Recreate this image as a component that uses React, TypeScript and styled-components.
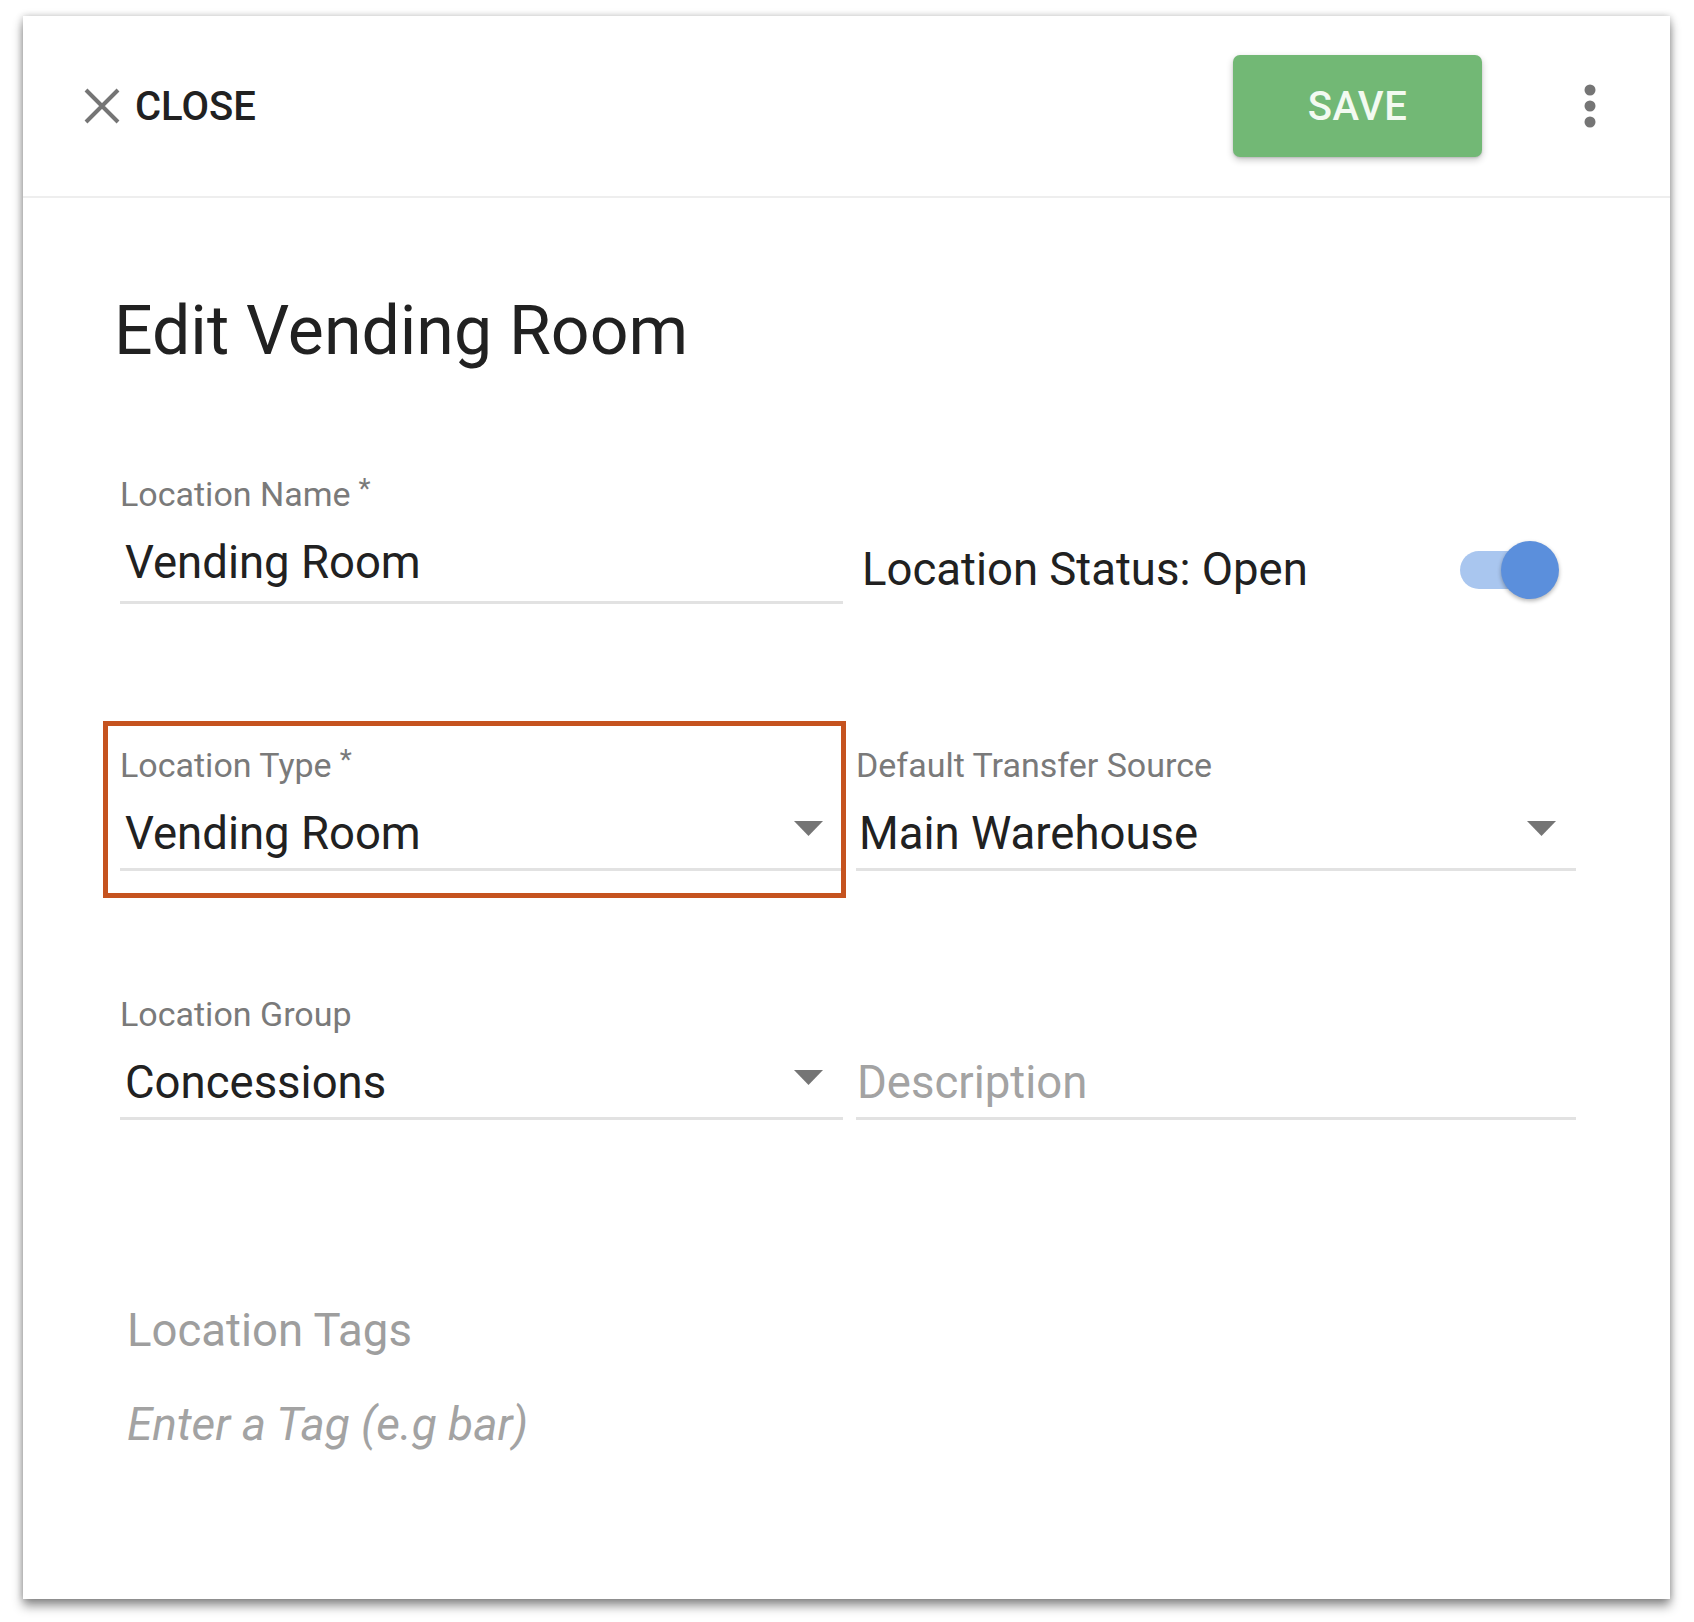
import React from "react";
import styled, { createGlobalStyle } from "styled-components";

const GlobalStyle = createGlobalStyle`
  html, body { margin: 0; padding: 0; background: #ffffff; }
  body { font-family: Roboto, "Liberation Sans", Arial, sans-serif; color: #212121; }
  * { box-sizing: border-box; }
`;

const Page = styled.div`
  width: 1694px;
  height: 1622px;
  padding: 16px 24px 23px 23px;
`;

const Card = styled.div`
  width: 1647px;
  height: 1583px;
  background: #ffffff;
  box-shadow: 0 7px 10px rgba(0, 0, 0, 0.42), 0 0 7px rgba(0, 0, 0, 0.22);
  display: flex;
  flex-direction: column;
`;

const Header = styled.header`
  height: 182px;
  flex: none;
  display: flex;
  align-items: center;
  padding: 0 60px 0 61px;
  border-bottom: 2px solid #eeeeee;
`;

const CloseButton = styled.button`
  display: flex;
  align-items: center;
  gap: 15px;
  background: none;
  border: none;
  padding: 0;
  font-family: Roboto, "Liberation Sans", Arial, sans-serif;
  font-size: 40px;
  font-weight: 500;
  letter-spacing: 0;
  color: #212121;
  cursor: pointer;
`;

const Spacer = styled.div`
  flex: 1;
`;

const SaveButton = styled.button`
  width: 249px;
  height: 102px;
  border: none;
  border-radius: 7px;
  background: #72b875;
  color: #f3faf1;
  font-family: Roboto, "Liberation Sans", Arial, sans-serif;
  font-size: 40px;
  font-weight: 500;
  letter-spacing: 0.5px;
  box-shadow: 0 3px 7px rgba(0, 0, 0, 0.22), 0 1px 2px rgba(0, 0, 0, 0.12);
  margin-right: 88px;
  cursor: pointer;
`;

const MoreButton = styled.button`
  width: 40px;
  height: 60px;
  border: none;
  background: none;
  padding: 0;
  display: flex;
  align-items: center;
  justify-content: center;
  cursor: pointer;
`;

const Body = styled.main`
  padding: 93px 94px 0 97px;
`;

const Title = styled.h1`
  margin: 0 0 0 -6px;
  font-size: 68px;
  line-height: 80px;
  font-weight: 400;
  color: #212121;
`;

const FormRow = styled.div<{ $gap: number }>`
  display: grid;
  grid-template-columns: 723px 720px;
  column-gap: 13px;
  margin-top: ${(p) => p.$gap}px;
`;

const Field = styled.div<{ $highlight?: boolean }>`
  position: relative;
  display: flex;
  flex-direction: column;
  padding-bottom: 6px;
  border-bottom: 3px solid #e2e2e2;
  ${(p) =>
    p.$highlight &&
    `
    &::after {
      content: "";
      position: absolute;
      left: -17px;
      right: -3px;
      top: -24px;
      bottom: -30px;
      border: 5px solid #c5531f;
      pointer-events: none;
    }
  `}
`;

const Label = styled.label`
  display: block;
  height: 40px;
  font-size: 34px;
  line-height: 40px;
  color: #7a7a7a;
`;

const Required = styled.span`
  position: relative;
  top: -8px;
  font-size: 28px;
  line-height: 0;
  margin-left: 8px;
`;

const ValueRow = styled.div<{ $inset: number }>`
  display: flex;
  align-items: center;
  height: 56px;
  margin-top: 21px;
  padding-left: ${(p) => p.$inset}px;
  padding-right: 20px;
`;

const Value = styled.span<{ $placeholder?: boolean }>`
  flex: 1;
  font-size: 45.5px;
  line-height: 56px;
  color: ${(p) => (p.$placeholder ? "#a3a3a3" : "#212121")};
`;

const Arrow = styled.svg`
  flex: none;
  margin-bottom: 12px;
`;

const StatusCell = styled.div`
  display: flex;
  align-items: center;
  justify-content: space-between;
  padding: 66px 17px 4px 6px;
`;

const StatusText = styled.span`
  font-size: 45.5px;
  line-height: 56px;
  color: #212121;
`;

const SwitchRoot = styled.div`
  position: relative;
  width: 99px;
  height: 60px;
  flex: none;
`;

const SwitchTrack = styled.div`
  position: absolute;
  left: 0;
  top: 11px;
  width: 80px;
  height: 38px;
  border-radius: 19px;
  background: #a9c6ef;
`;

const SwitchThumb = styled.div`
  position: absolute;
  right: 0;
  top: 1px;
  width: 58px;
  height: 58px;
  border-radius: 50%;
  background: #5b8fdc;
  box-shadow: 0 2px 4px rgba(0, 0, 0, 0.3);
`;

const TagsTitle = styled.div`
  margin-top: 183px;
  padding-left: 7px;
  font-size: 45.5px;
  line-height: 56px;
  color: #9e9e9e;
`;

const TagInput = styled.div`
  margin-top: 37px;
  padding-left: 7px;
  font-size: 46px;
  line-height: 56px;
  font-style: italic;
  color: #a3a3a3;
`;

const DropArrow = () => (
  <Arrow width="29" height="15" viewBox="0 0 29 15">
    <polygon points="0,0 29,0 14.5,15" fill="#757575" />
  </Arrow>
);

type FieldProps = {
  label?: string;
  required?: boolean;
  value: string;
  placeholder?: boolean;
  select?: boolean;
  inset: number;
  highlight?: boolean;
};

const FormField = ({ label, required, value, placeholder, select, inset, highlight }: FieldProps) => (
  <Field $highlight={highlight}>
    <Label>
      {label}
      {required && <Required>*</Required>}
    </Label>
    <ValueRow $inset={inset}>
      <Value $placeholder={placeholder}>{value}</Value>
      {select && <DropArrow />}
    </ValueRow>
  </Field>
);

export default function App() {
  return (
    <>
      <GlobalStyle />
      <Page>
        <Card>
          <Header>
            <CloseButton>
              <svg width="36" height="36" viewBox="0 0 36 36">
                <path d="M2 2 L34 34 M34 2 L2 34" stroke="#757575" strokeWidth="4" fill="none" />
              </svg>
              CLOSE
            </CloseButton>
            <Spacer />
            <SaveButton>SAVE</SaveButton>
            <MoreButton aria-label="more">
              <svg width="12" height="44" viewBox="0 0 12 44">
                <circle cx="6" cy="6" r="5.5" fill="#757575" />
                <circle cx="6" cy="22" r="5.5" fill="#757575" />
                <circle cx="6" cy="38" r="5.5" fill="#757575" />
              </svg>
            </MoreButton>
          </Header>
          <Body>
            <Title>Edit Vending Room</Title>
            <FormRow $gap={103}>
              <FormField label="Location Name" required value="Vending Room" inset={5} />
              <StatusCell>
                <StatusText>Location Status: Open</StatusText>
                <SwitchRoot>
                  <SwitchTrack />
                  <SwitchThumb />
                </SwitchRoot>
              </StatusCell>
            </FormRow>
            <FormRow $gap={141}>
              <FormField label="Location Type" required value="Vending Room" select inset={5} highlight />
              <FormField label="Default Transfer Source" value="Main Warehouse" select inset={3} />
            </FormRow>
            <FormRow $gap={123}>
              <FormField label="Location Group" value="Concessions" select inset={5} />
              <FormField value="Description" placeholder inset={1} />
            </FormRow>
            <TagsTitle>Location Tags</TagsTitle>
            <TagInput>Enter a Tag (e.g bar)</TagInput>
          </Body>
        </Card>
      </Page>
    </>
  );
}
